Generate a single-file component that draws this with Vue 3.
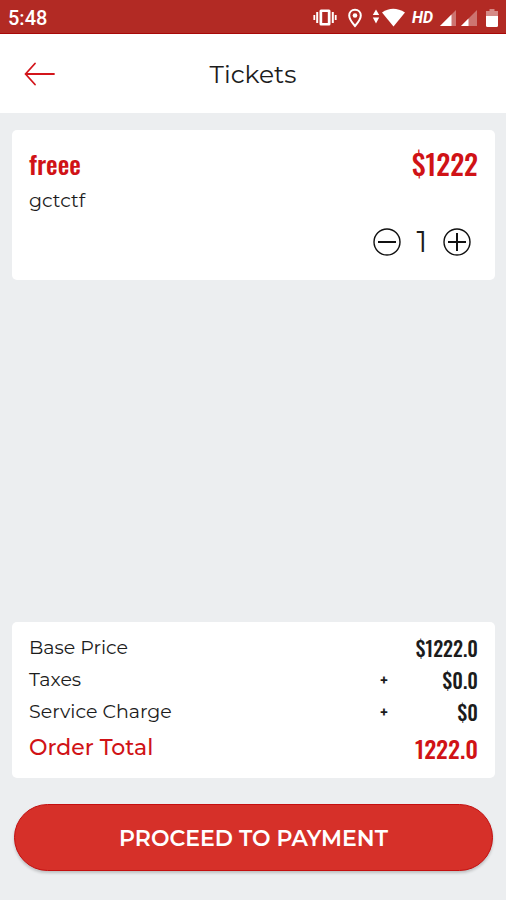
<script setup>
import { ref, computed } from 'vue'

const ticket = {
  name: 'freee',
  description: 'gctctf',
  price: 1222
}

const quantity = ref(1)

const total = computed(() => (ticket.price * quantity.value).toFixed(1))

const charges = computed(() => [
  { label: 'Base Price', sign: '', value: '$' + total.value },
  { label: 'Taxes', sign: '+', value: '$0.0' },
  { label: 'Service Charge', sign: '+', value: '$0' }
])

const decrease = () => {
  if (quantity.value > 1) quantity.value--
}

const increase = () => {
  quantity.value++
}
</script>

<template>
  <div class="screen">
    <div class="status-bar">
      <span class="clock">5:48</span>
      <div class="status-icons">
        <!-- vibrate -->
        <svg width="24" height="20" viewBox="0 0 24 20" fill="#fff">
          <path fill-rule="evenodd" d="M8 1.500h8q1.500 0 1.500 1.500v13q0 1.500-1.500 1.500H8q-1.500 0-1.500-1.500V3Q6.500 1.500 8 1.500zM9.200 4v11h5.600V4z" />
          <path d="M3.200 4h2v11h-2zM.4 7h1.800v5H.4zM18.800 4h2v11h-2zM21.800 7h1.800v5h-1.800z" />
        </svg>
        <!-- location -->
        <svg class="pin" width="16" height="20" viewBox="0 0 16 20">
          <path d="M8 1.800c-3.400 0-5.800 2.500-5.800 5.700C2.200 11.500 8 18 8 18s5.800-6.500 5.800-10.500c0-3.200-2.400-5.700-5.800-5.700z" fill="none" stroke="#fff" stroke-width="2" />
          <circle cx="8" cy="7.500" r="2.300" fill="#fff" />
        </svg>
        <!-- data arrows and wifi -->
        <svg class="wifi" width="34" height="20" viewBox="0 0 34 20" fill="#fff">
          <path d="M4 1.500l3.200 5.500H.8zM4 15.500L.8 9.500h6.400z" />
          <path d="M10 4.500Q21 -3 33 4.500L21.500 18.500z" />
        </svg>
        <span class="hd">HD</span>
        <svg class="signal" width="18" height="18" viewBox="0 0 18 18" fill="#fff">
          <path d="M17 1v16H1z" opacity=".35" />
          <path d="M12.500 5.500V17H1z" />
        </svg>
        <svg class="signal" width="18" height="18" viewBox="0 0 18 18" fill="#fff">
          <path d="M17 1v16H1z" opacity=".35" />
          <path d="M8.500 9.500V17H1z" />
        </svg>
        <svg class="battery" width="12" height="20" viewBox="0 0 12 20" fill="#fff">
          <path d="M3.500 1h5v2H12v5H0V3h3.500z" opacity=".45" />
          <path d="M0 8h12v9.500q0 1.500-1.500 1.500h-9Q0 19 0 17.500z" />
        </svg>
      </div>
    </div>

    <header class="toolbar">
      <button class="back" type="button" aria-label="Back">
        <svg width="32" height="24" viewBox="0 0 32 24" fill="none" stroke="#d3151b" stroke-width="1.800" stroke-linecap="round" stroke-linejoin="round">
          <path d="M11 1.500L1.500 12 11 22.500M1.500 12H30" />
        </svg>
      </button>
      <h1>Tickets</h1>
    </header>

    <main class="content">
      <section class="card ticket">
        <div class="ticket-head">
          <h2>{{ ticket.name }}</h2>
          <span class="price">${{ ticket.price }}</span>
        </div>
        <p>{{ ticket.description }}</p>
        <div class="stepper">
          <button type="button" aria-label="Decrease quantity" @click="decrease">
            <svg width="28" height="28" viewBox="0 0 28 28" fill="none" stroke="#111">
              <circle cx="14" cy="14" r="13" stroke-width="1.400" />
              <path d="M5 14h18" stroke-width="2" />
            </svg>
          </button>
          <output>{{ quantity }}</output>
          <button type="button" aria-label="Increase quantity" @click="increase">
            <svg width="28" height="28" viewBox="0 0 28 28" fill="none" stroke="#111">
              <circle cx="14" cy="14" r="13" stroke-width="1.400" />
              <path d="M5 14h18M14 5v18" stroke-width="2" />
            </svg>
          </button>
        </div>
      </section>

      <section class="card summary">
        <table>
          <tbody>
            <tr v-for="row in charges" :key="row.label">
              <th scope="row">{{ row.label }}</th>
              <td class="sign">{{ row.sign }}</td>
              <td class="amount">{{ row.value }}</td>
            </tr>
            <tr class="total">
              <th scope="row">Order Total</th>
              <td class="sign"></td>
              <td class="amount">{{ total }}</td>
            </tr>
          </tbody>
        </table>
      </section>

      <button class="pay" type="button">PROCEED TO PAYMENT</button>
    </main>
  </div>
</template>

<style>
body {
  background: #eceef0;
}
</style>

<style scoped>
.screen {
  display: flex;
  flex-direction: column;
  min-height: 100vh;
  background: #eceef0;
  color: #1c1c1c;
  font-family: Montserrat, Inter, sans-serif;
}

h1,
h2,
p {
  margin: 0;
  font-weight: 400;
}

button {
  border: 0;
  padding: 0;
  background: none;
  font-family: inherit;
  cursor: pointer;
}

svg {
  display: block;
}

/* 状态栏 */
.status-bar {
  display: flex;
  align-items: center;
  justify-content: space-between;
  height: 34px;
  padding: 2px 8px 0;
  box-sizing: border-box;
  border-bottom: 1px solid #a80808;
  background: #b22a24;
  color: #fff;
  font-family: Roboto, sans-serif;
}

.clock {
  font-size: 20px;
  font-weight: 500;
}

.status-icons {
  display: flex;
  align-items: center;
}

.pin {
  margin-left: 10px;
}

.wifi {
  margin-left: 9px;
}

.hd {
  margin: 0 6px 0 6px;
  font-size: 16px;
  font-weight: 700;
  font-style: italic;
}

.signal {
  margin-right: 3px;
}

.battery {
  margin-left: 5px;
}

/* 标题栏 */
.toolbar {
  display: grid;
  grid-template-columns: 32px 1fr 32px;
  align-items: center;
  height: 79px;
  padding: 0 24px;
  background: #fff;
}

.toolbar h1 {
  font-size: 25px;
  line-height: 32px;
  text-align: center;
}

/* 内容 */
.content {
  display: flex;
  flex: 1;
  flex-direction: column;
  padding: 17px 11px 29px 12px;
}

.card {
  border-radius: 5px;
  background: #fff;
}

.ticket {
  padding: 16px 17px 20px;
}

.ticket-head {
  display: flex;
  justify-content: space-between;
  line-height: 36px;
  color: #d01216;
}

.ticket-head h2,
.price,
.amount {
  font-family: Oswald, "Liberation Sans Narrow", "Roboto Condensed", sans-serif;
  font-weight: 500;
}

.ticket-head h2 {
  font-size: 26px;
}

.price {
  font-size: 28px;
}

.ticket p {
  font-size: 19px;
  line-height: 38px;
}

.stepper {
  display: flex;
  align-items: center;
  justify-content: flex-end;
  gap: 12px;
  margin-top: 4px;
  padding-right: 7px;
}

.stepper output {
  min-width: 18px;
  font-size: 30px;
  line-height: 36px;
  text-align: center;
}

.summary {
  margin-top: auto;
  padding: 10px 17px;
}

table {
  width: 100%;
  border-collapse: collapse;
}

th,
td {
  height: 32px;
  padding: 0;
  line-height: 32px;
}

th {
  font-size: 19px;
  font-weight: 400;
  text-align: left;
}

.sign {
  width: 12px;
  font-size: 14px;
  font-weight: 700;
  text-align: center;
}

.amount {
  width: 88px;
  font-size: 20px;
  text-align: right;
}

.total th,
.total td {
  height: 40px;
  color: #d01216;
}

.total th {
  font-size: 22px;
  font-weight: 500;
}

.total .amount {
  font-size: 24px;
}

.pay {
  height: 67px;
  margin: 26px 2px 0;
  padding-top: 2px;
  border: 1px solid #c40f10;
  border-radius: 34px;
  background: #d63029;
  box-shadow: 0 2px 3px rgba(0, 0, 0, 0.2);
  color: #fff;
  font-size: 22px;
  font-weight: 600;
}
</style>
